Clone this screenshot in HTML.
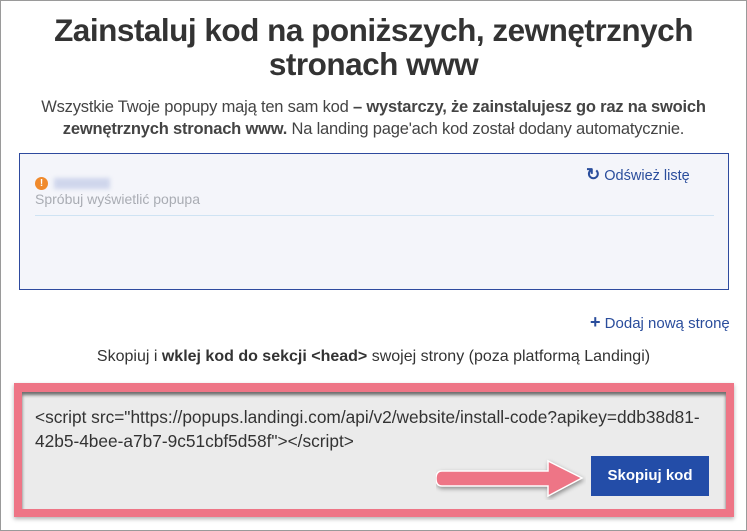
<!DOCTYPE html>
<html><head><meta charset="utf-8"><style>
*{margin:0;padding:0;box-sizing:border-box}
body{width:747px;height:531px;background:#fff;font-family:"Liberation Sans",sans-serif;position:relative;overflow:hidden;color:#333}
.frame{position:absolute;left:0;top:0;width:747px;height:531px;border:1px solid #9a9a9a}
h1{position:absolute;left:0;width:747px;top:13px;text-align:center;font-size:31.5px;line-height:34px;font-weight:bold;color:#333;letter-spacing:-0.5px}
.lead{position:absolute;left:0;width:747px;top:96px;text-align:center;font-size:16.5px;line-height:22px;color:#444;letter-spacing:-0.2px}
.box{position:absolute;left:19px;top:153px;width:710px;height:137px;background:#f4f5fa;border:1px solid #2e4a9e}
.sep{position:absolute;left:15px;top:61px;width:679px;height:1px;background:#cfe3f3}
.warn{position:absolute;left:15px;top:23px;width:13px;height:13px;border-radius:50%;background:#f08a2c;color:#fff;font-size:10px;font-weight:bold;text-align:center;line-height:13px}
.blur{position:absolute;left:34px;top:24px;width:56px;height:11px;background:#cfd6ec;filter:blur(2px)}
.try{position:absolute;left:15px;top:37px;font-size:14px;color:#a9acb3}
.ref{position:absolute;left:566px;top:11px;font-size:14.5px;color:#2a4d9c}
.add{position:absolute;left:590px;top:312px;font-size:15px;color:#2a4d9c}
.copytxt{position:absolute;left:0;width:747px;top:348px;text-align:center;font-size:16px;color:#333}
.pink{position:absolute;left:14px;top:383px;width:720px;height:134px;background:#ee7586;box-shadow:0 2px 4px rgba(0,0,0,.3)}
.gray{position:absolute;left:8px;top:9px;width:704px;height:117px;background:#ebebeb;box-shadow:inset 0 3px 3px rgba(0,0,0,.55)}
.code{position:absolute;left:13px;top:13px;font-size:17.3px;line-height:24px;color:#333;width:700px;white-space:nowrap}
.btn{position:absolute;left:569px;top:64px;width:118px;height:40px;background:#234da8;color:#fff;font-weight:bold;font-size:15px;text-align:center;line-height:40px}
</style></head><body>
<div class="frame"></div>
<h1>Zainstaluj kod na poniższych, zewnętrznych<br>stronach www</h1>
<div class="lead">Wszystkie Twoje popupy mają ten sam kod <b>– wystarczy, że zainstalujesz go raz na swoich<br>zewnętrznych stronach www.</b> Na landing page'ach kod został dodany automatycznie.</div>
<div class="box">
<div class="warn">!</div><div class="blur"></div>
<div class="try">Spróbuj wyświetlić popupa</div>
<div class="ref"><b style="font-size:17px">↻</b> Odśwież listę</div>
<div class="sep"></div>
</div>
<div class="add"><b style="font-size:18px">+</b> Dodaj nową stronę</div>
<div class="copytxt">Skopiuj i <b>wklej kod do sekcji &lt;head&gt;</b> swojej strony (poza platformą Landingi)</div>
<div class="pink"><div class="gray">
<div class="code">&lt;script src="https://popups.landingi.com/api/v2/website/install-code?apikey=ddb38d81-<br>42b5-4bee-a7b7-9c51cbf5d58f"&gt;&lt;/script&gt;</div>
<div class="btn">Skopiuj kod</div>
</div></div>
<svg style="position:absolute;left:436px;top:458px" width="150" height="42"><path d="M6 13 H112 V3 L146 20 L112 38 V28 H6 Q0 28 0 20.5 Q0 13 6 13Z" fill="#ee7586" stroke="#fff" stroke-width="1.5" style="filter:drop-shadow(1px 2px 2px rgba(0,0,0,.4))"/></svg>
</body></html>
